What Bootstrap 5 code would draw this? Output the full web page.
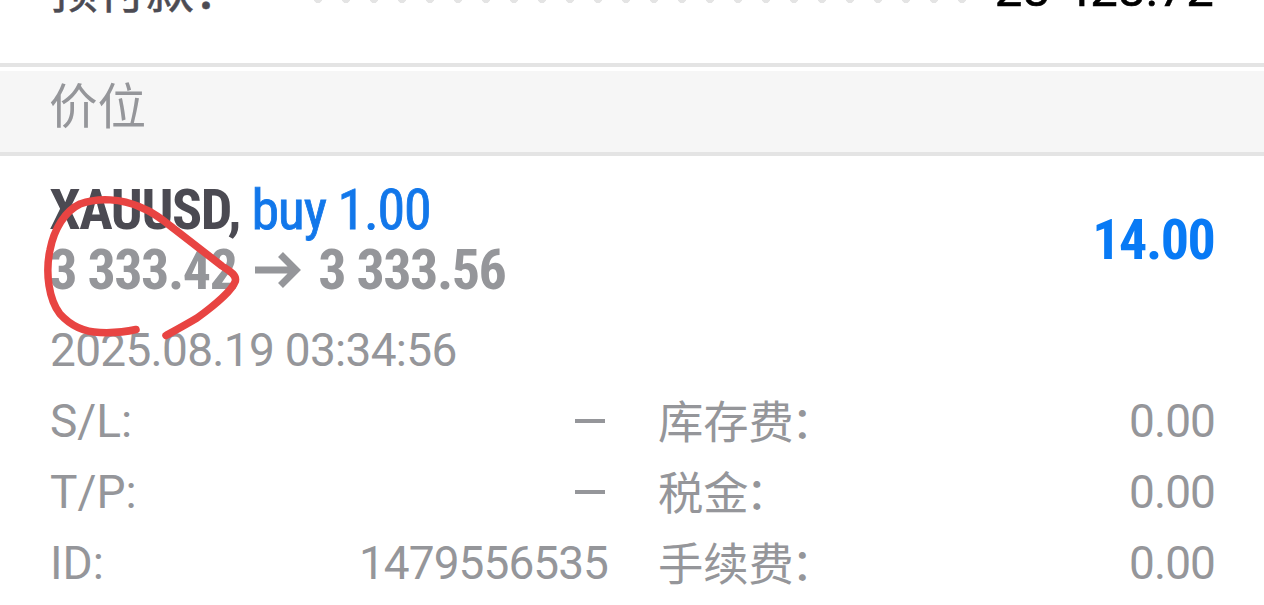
<!DOCTYPE html>
<html lang="zh-CN">
<head>
<meta charset="utf-8">
<meta name="viewport" content="width=device-width, initial-scale=1">
<title>价位</title>
<link href="https://cdn.jsdelivr.net/npm/bootstrap@5.3.0/dist/css/bootstrap.min.css" rel="stylesheet">
<style>
body{font-family:Roboto,"Noto Sans CJK SC",sans-serif;background:#fff;color:#95969a;overflow:hidden;height:605px}
.page-pad{padding-left:50px;padding-right:50px}
.margin-row{height:63px;overflow:hidden;color:#4c4b53}
.margin-line{height:60px;line-height:60px;margin-top:-40px;font-size:48px;white-space:pre}
.margin-label{width:254px;line-height:63px;-webkit-text-stroke:.5px #4c4b53}
.margin-value{color:#000;font-size:49px;margin-left:auto;letter-spacing:.15px;-webkit-text-stroke:.6px #000}
.leader{height:8px;width:672px;margin-top:35px;background:radial-gradient(circle,#e4e4e4 3.8px,transparent 4.4px) 0 0/28px 8px}
.section-head{height:93px;border-top:4px solid #e4e4e4;border-bottom:4px solid #e4e4e4;padding-top:4px}
.section-title{background:#f6f6f6;height:81px;line-height:74px;font-size:48.6px;padding-left:49px}
.deal{padding-top:24px;height:159px}
.deal-line{height:60px;line-height:60px;font-size:56px;font-family:"Roboto Condensed",Roboto,sans-serif;font-weight:700;white-space:pre;letter-spacing:-1.5px}
.symbol{color:#4b4a52;letter-spacing:-1.4px}
.deal-line>span:first-child{margin-left:-.7px}
.action{color:#1277ea;font-weight:400;letter-spacing:-1.2px;-webkit-text-stroke:.8px #1277ea}
.arrow{width:46px;height:36px;margin:0 17.5px 0 18.5px}
.profit{color:#087af5;line-height:120px;margin-right:-.3px}
.detail{height:71px;line-height:71px;font-size:46px;white-space:pre}
.cell-left{width:558px}
.cell-gap{width:50px}
.num{letter-spacing:-.95px}
.fee{margin-right:-1px}
.stamp{letter-spacing:-.7px}
.cjk{font-size:45.3px;line-height:75px}
.colon{margin-left:-3px}
.dash{width:30px;height:4px;background:#95969a;margin:0 3px 1px 0}
.annot{left:0;top:0;pointer-events:none}
</style>
</head>
<body class="position-relative">
<div class="margin-row page-pad"><div class="margin-line d-flex"><span class="margin-label">预付款：</span><div class="leader"></div><span class="margin-value">28 428.72</span></div></div>
<header class="section-head"><div class="section-title">价位</div></header>
<main>
<section class="deal page-pad d-flex justify-content-between">
<div><div class="deal-line"><span class="symbol">XAUUSD,</span> <span class="action">buy 1.00</span></div>
<div class="deal-line d-flex align-items-center"><span>3 333.42</span><svg class="arrow" viewBox="0 0 46 36" fill="none" stroke="#95969a" stroke-width="7"><path d="M0 18H41M25.5 2.5 41 18 25.5 33.5"/></svg><span>3 333.56</span></div></div>
<div class="deal-line profit">14.00</div>
</section>
<div class="detail page-pad stamp">2025.08.19 03:34:56</div>
<div class="detail page-pad d-flex"><div class="cell-left d-flex justify-content-between align-items-center"><span>S/L:</span><i class="dash"></i></div><div class="cell-gap"></div><span class="cjk">库存费<span class="colon">：</span></span><span class="ms-auto num fee">0.00</span></div>
<div class="detail page-pad d-flex"><div class="cell-left d-flex justify-content-between align-items-center"><span>T/P:</span><i class="dash"></i></div><div class="cell-gap"></div><span class="cjk">税金<span class="colon">：</span></span><span class="ms-auto num fee">0.00</span></div>
<div class="detail page-pad d-flex"><div class="cell-left d-flex justify-content-between align-items-center"><span>ID:</span><span class="num">1479556535</span></div><div class="cell-gap"></div><span class="cjk">手续费<span class="colon">：</span></span><span class="ms-auto num fee">0.00</span></div>
</main>
<svg class="annot position-absolute" width="300" height="350" fill="none" stroke="#e84442" stroke-width="7.5" stroke-linecap="round" stroke-linejoin="round"><path d="M136 329.5C125 332 112 333 100 332.5C82 332 70 325 60 314C49 300 45 273 50 250C54 229 65 211 80 204C99 197 122 199 140 207C153 212 162 219 173 228L222 266C228 270 238 275 235 282C232 290 215 305 197 318C187 324 176 330 166 335.5"/></svg>
<script src="https://cdn.jsdelivr.net/npm/bootstrap@5.3.0/dist/js/bootstrap.bundle.min.js"></script>
</body>
</html>
